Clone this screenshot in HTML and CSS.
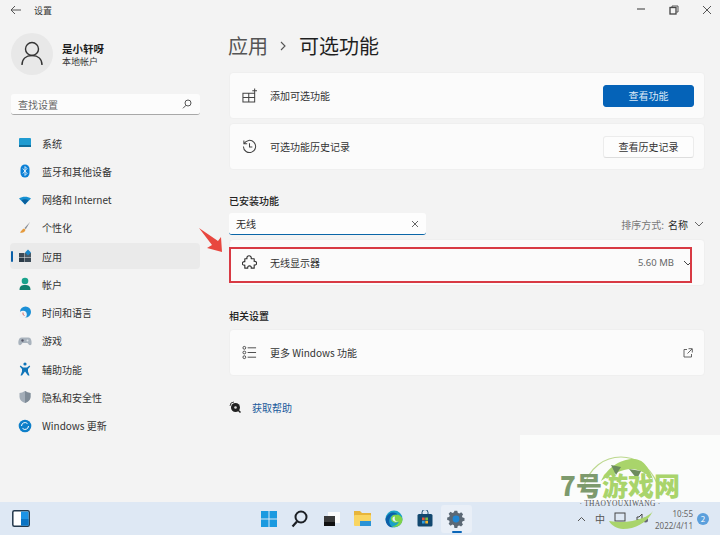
FILE: index.html
```html
<!DOCTYPE html>
<html lang="zh-CN">
<head>
<meta charset="utf-8">
<title>设置</title>
<link rel="stylesheet" href="styles.css">
</head>
<body>
<div class="window">
  <header class="titlebar">
    <svg class="back" width="12" height="10" viewBox="0 0 12 10"><path d="M5 1 1 5l4 4M1 5h10" fill="none" stroke="#555" stroke-width="1"/></svg>
    <span class="apptitle">设置</span>
    <div class="winctl">
      <svg width="10" height="10" viewBox="0 0 10 10"><path d="M1 4h8" stroke="#555" stroke-width="1.2"/></svg>
      <svg width="10" height="10" viewBox="0 0 10 10"><path d="M3 2.5V1h6v6H7.500" fill="none" stroke="#555"/><rect x="1" y="2.500" width="6" height="6.500" fill="none" stroke="#444" stroke-width="1.300"/></svg>
      <svg width="10" height="10" viewBox="0 0 10 10"><path d="m1 1 8 8M9 1 1 9" stroke="#555"/></svg>
    </div>
  </header>
  <div class="columns">
    <aside class="sidebar">
      <div class="profile">
        <div class="avatar">
          <svg width="24" height="26" viewBox="0 0 24 26"><circle cx="12" cy="8" r="6.500" fill="none" stroke="#333" stroke-width="1.400"/><path d="M2 24c0-6 4-9.500 10-9.500S22 18 22 24" fill="none" stroke="#333" stroke-width="1.400"/></svg>
        </div>
        <div class="who"><strong>是小轩呀</strong><span>本地帐户</span></div>
      </div>
      <div class="search">
        <span>查找设置</span>
        <svg width="10" height="10" viewBox="0 0 10 10"><circle cx="6" cy="4" r="3" fill="none" stroke="#555"/><path d="M4 6.300 1 9.300" stroke="#555"/></svg>
      </div>
      <nav class="nav">
        <a class="item"><svg class="ic" viewBox="0 0 14 14"><rect x="1" y="2" width="12" height="9" rx="1" fill="#1f9bd1"/><rect x="1" y="9" width="12" height="2" fill="#0f6d9c"/></svg>系统</a>
        <a class="item"><svg class="ic" viewBox="0 0 14 14"><rect x="2.500" y="0.500" width="9" height="13" rx="4.500" fill="#0a7fd6"/><path d="m4.800 4.500 4.200 5L7 11.500v-9l2 2-4.200 5" fill="none" stroke="#fff" stroke-width=".8"/></svg>蓝牙和其他设备</a>
        <a class="item"><svg class="ic" viewBox="0 0 14 14"><path d="M1 5.500C4.500 3 9.500 3 13 5.500L7 11.500z" fill="#1590d2"/><path d="M3.500 7.300c2-1.300 5-1.300 7 0L7 11.500z" fill="#0b5f9c"/></svg>网络和 Internet</a>
        <a class="item"><svg class="ic" viewBox="0 0 14 14"><path d="M12 1 6.500 7l1.300 1.300z" fill="#8a8f96"/><path d="M6 7.500c-2 .5-2.500 2.500-4 4 2.500.5 5 0 5.500-2.700z" fill="#e59a3c"/></svg>个性化</a>
        <a class="item active"><svg class="ic" viewBox="0 0 14 14"><rect x="1" y="4" width="5.500" height="4.500" fill="#3b4a57"/><rect x="1" y="9" width="5.500" height="4" fill="#2b3a47"/><rect x="7" y="9" width="6" height="4" fill="#3b4a57"/><rect x="7" y="4" width="6" height="4.500" fill="#4a5a67"/><path d="m10 .5 3 3-3 3-3-3z" fill="#1a86c8"/></svg>应用</a>
        <a class="item"><svg class="ic" viewBox="0 0 14 14"><circle cx="7" cy="4" r="3.300" fill="#1aa38c"/><path d="M1.500 13c0-4 2-5 5.500-5s5.500 1 5.500 5z" fill="#12806e"/></svg>帐户</a>
        <a class="item"><svg class="ic" viewBox="0 0 14 14"><circle cx="7.500" cy="6" r="5.500" fill="#1b8fd6"/><circle cx="5" cy="8.500" r="3.800" fill="#f1f1f4"/><path d="M5 6.500v2l1.500 1" fill="none" stroke="#c8504a" stroke-width=".8"/></svg>时间和语言</a>
        <a class="item"><svg class="ic" viewBox="0 0 14 14"><path d="M3.500 3.500h7C13 3.500 14 7 13.500 10c-.3 1.500-2 1.500-3 .3L9.500 9h-5l-1 1.300c-1 1.200-2.700 1.200-3-.3C0 7 1 3.500 3.500 3.500z" fill="#a9b3bd"/><circle cx="4.500" cy="6.500" r="1.200" fill="#556"/><circle cx="9.500" cy="6.500" r="1" fill="#dfe4ea"/></svg>游戏</a>
        <a class="item"><svg class="ic" viewBox="0 0 14 14"><circle cx="7" cy="2" r="1.600" fill="#0f74b8"/><path d="M2.500 3.500 5 5.500h4l2.500-2 .7 1.100L10 7v2.500l1.500 4H10L7 9.500 4 13.500H2.500l1.500-4V7L1.800 4.600z" fill="#0f74b8"/></svg>辅助功能</a>
        <a class="item"><svg class="ic" viewBox="0 0 14 14"><path d="M7 1c2 1.400 3.700 1.800 5.500 2v4c0 3-2.500 5-5.500 6-3-1-5.500-3-5.500-6V3C3.300 2.800 5 2.400 7 1z" fill="#a3adb8"/><path d="M7 1c2 1.400 3.700 1.800 5.500 2v4c0 3-2.500 5-5.500 6z" fill="#7f8b97"/></svg>隐私和安全性</a>
        <a class="item"><svg class="ic" viewBox="0 0 14 14"><circle cx="7" cy="7" r="6.300" fill="#0e7fc9"/><path d="M3.500 7a3.500 3.500 0 0 1 6-2.400M10.500 7a3.500 3.500 0 0 1-6 2.400" fill="none" stroke="#fff" stroke-width="1"/></svg>Windows 更新</a>
      </nav>
    </aside>
    <main class="main">
      <h1 class="crumb"><span class="parent">应用</span><svg width="8" height="10" viewBox="0 0 8 10"><path d="m2 1 4 4-4 4" fill="none" stroke="#555" stroke-width="1.100"/></svg><span>可选功能</span></h1>
      <section class="card">
        <svg class="rowic" viewBox="0 0 16 16"><path d="M1 5.500h12.500V15H1zM7.200 5.500V15M1 10.200h12.500M13.500 .5v5M11 3h5" fill="none" stroke="#444" stroke-width="1.100"/></svg>
        <span class="label">添加可选功能</span>
        <button class="btn primary">查看功能</button>
      </section>
      <section class="card gap">
        <svg class="rowic" viewBox="0 0 16 16"><path d="M2.200 5A6.500 6.500 0 1 1 1.500 8M2 1.500V5h3.500M8 4.500V8.500h3" fill="none" stroke="#444" stroke-width="1.100"/></svg>
        <span class="label">可选功能历史记录</span>
        <button class="btn">查看历史记录</button>
      </section>
      <h2 class="head">已安装功能</h2>
      <div class="filters">
        <div class="filter"><span>无线</span><svg width="8" height="8" viewBox="0 0 8 8"><path d="m1 1 6 6M7 1 1 7" stroke="#666"/></svg></div>
        <div class="sort"><span class="dim">排序方式:</span> 名称 <svg width="10" height="6" viewBox="0 0 10 6"><path d="m1 1 4 4 4-4" fill="none" stroke="#666"/></svg></div>
      </div>
      <section class="card list">
        <svg class="rowic" viewBox="0 0 16 16"><path d="M3 4h2.300C4.800 2.200 6 .8 7.500.8S10.300 2.200 9.800 4H13v2.800c1.600-.4 2.600.7 2.600 1.900s-1 2.300-2.600 1.900V14H9.800c.4-1.500-.6-2.400-1.800-2.400S5.800 12.500 6.200 14H3v-3.200C1.500 11.200.4 10.200.4 9S1.500 6.800 3 7.200z" fill="none" stroke="#333" stroke-width="1.200" stroke-linejoin="round"/></svg>
        <span class="label">无线显示器</span>
        <span class="size">5.60 MB</span>
        <svg class="chev" width="10" height="6" viewBox="0 0 10 6"><path d="m1 1 4 4 4-4" fill="none" stroke="#444"/></svg>
      </section>
      <h2 class="head short">相关设置</h2>
      <section class="card related">
        <svg class="rowic" viewBox="0 0 16 16"><path d="M6 3h9M6 8h9M6 13h9" stroke="#444"/><circle cx="2.500" cy="3" r="1.500" fill="none" stroke="#444"/><circle cx="2.500" cy="8" r="1.500" fill="none" stroke="#444"/><circle cx="2.500" cy="13" r="1.500" fill="none" stroke="#444"/></svg>
        <span class="label">更多 Windows 功能</span>
        <svg class="ext" width="10" height="10" viewBox="0 0 10 10"><path d="M4 1.500H1v7.500h7.500V6M5.500.7h3.800v3.800M9 1 4.500 5.500" fill="none" stroke="#555" stroke-width=".9"/></svg>
      </section>
      <div class="help">
        <svg width="12" height="12" viewBox="0 0 12 12"><circle cx="6.500" cy="6.500" r="4.500" fill="#222"/><path d="M1 5a4 4 0 0 1 4-4" fill="none" stroke="#444"/><path d="m9 9 2.500 2.500" stroke="#222" stroke-width="1.500"/><circle cx="6.500" cy="6.500" r="1.300" fill="#ddd"/></svg>
        <a>获取帮助</a>
      </div>
    </main>
  </div>
  <div class="wash"></div>
  <svg class="arrow" width="26" height="26" viewBox="0 0 26 26"><path d="M1 1 20 14l3-4 1 15-15-4 5-3z" fill="#e8473f"/></svg>
  <div class="redbox"></div>
</div>
<footer class="taskbar">
  <svg class="snap" width="18" height="17" viewBox="0 0 18 17"><rect x=".8" y=".8" width="16.400" height="15.400" rx="1.500" fill="#fff" stroke="#23384c" stroke-width="1.500"/><rect x="9" y="1.500" width="7.500" height="14" fill="#1b93e6"/><rect x="9" y="9" width="7.500" height="6.500" fill="#0b74c4"/></svg>
  <div class="apps">
    <span class="tb"><svg width="18" height="18" viewBox="0 0 18 18"><path d="M1 1h7.500v7.500H1zM9.500 1H17v7.500H9.500zM1 9.500h7.500V17H1zM9.500 9.500H17V17H9.500z" fill="#1b9ae0"/></svg></span>
    <span class="tb"><svg width="17" height="18" viewBox="0 0 17 18"><circle cx="10" cy="7" r="5.500" fill="none" stroke="#1b1f24" stroke-width="2"/><path d="M6 11.500 1.500 16.500" stroke="#1b1f24" stroke-width="2.200"/></svg></span>
    <span class="tb"><svg width="17" height="16" viewBox="0 0 17 16"><rect x="5" y="1" width="12" height="11" fill="#fbfbfb"/><rect x="1" y="5" width="11" height="10" fill="#3a3a3a"/><rect x="1" y="11" width="11" height="4" fill="#111"/></svg></span>
    <span class="tb"><svg width="19" height="17" viewBox="0 0 19 17"><path d="M1 1h6l2 2h9v4H1z" fill="#e7b53b"/><rect x="1" y="5" width="17" height="11" rx="1" fill="#f9d561"/><rect x="7" y="11" width="11" height="5" fill="#2b93d6"/></svg></span>
    <span class="tb"><svg width="18" height="18" viewBox="0 0 18 18"><circle cx="9" cy="9" r="8.500" fill="#1aa0c7"/><path d="M17.500 9.500C17 6 14 4.500 11 4.500 7.500 4.500 5.500 7 6 9.500c.6 3 4.500 4 8 2.300-1.500 3-4.500 4.500-7 4.500 5 2 10.500-1.500 10.500-6.800z" fill="#7fd349"/><path d="M10 6.500c-2.200 0-3 2-2.300 3.500 1 1.800 3.500 2 6 1.500-3-.2-4.700-1-3.700-5z" fill="#e8f2f8"/><path d="M.5 9C.5 14 4 17.500 8 17.500 5 15.500 3.500 12 4.500 9 5.500 5.500 9 4 12.500 4.800 11 2 4 .5.500 9z" fill="#0c5fa8"/></svg></span>
    <span class="tb"><svg width="16" height="17" viewBox="0 0 16 17"><path d="M5 4V2.500a3 3 0 0 1 6 0V4" fill="none" stroke="#1e4e74"/><rect x=".5" y="4" width="15" height="12.500" rx="1.500" fill="#12486f"/><rect x="5" y="7.500" width="2.700" height="2.700" fill="#e6563a"/><rect x="8.300" y="7.500" width="2.700" height="2.700" fill="#7fbb42"/><rect x="5" y="10.800" width="2.700" height="2.700" fill="#2f9fe0"/><rect x="8.300" y="10.800" width="2.700" height="2.700" fill="#f6b72d"/></svg></span>
    <span class="tb current"><svg width="18" height="18" viewBox="0 0 18 18"><path d="M7.500 1h3l.5 2.200 1.600.7 2-1.200 2 2.100-1.200 2 .7 1.500 2 .5v2.900l-2 .5-.7 1.600 1.100 1.900-2 2-2-1.100-1.500.6-.5 2.100h-3L7 16.300l-1.600-.6-2 1.100-2-2 1.100-1.900-.6-1.600-2-.5V8.300l2-.5.7-1.500-1.200-2 2-2.100 2 1.200 1.600-.7z" fill="#5b6875" transform="translate(.3 -.3) scale(.95)"/><circle cx="9" cy="9" r="3.400" fill="#1f86d4"/></svg></span>
  </div>
  <div class="tray">
    <svg width="9" height="6" viewBox="0 0 9 6"><path d="m1 5 3.500-3.500L8 5" fill="none" stroke="#555"/></svg>
    <span class="ime">中</span>
    <svg width="13" height="13" viewBox="0 0 13 13"><rect x="1" y="1" width="10" height="8" fill="none" stroke="#444"/><path d="M3 11h6" stroke="#444"/></svg>
    <svg width="13" height="13" viewBox="0 0 13 13"><path d="M1 5h2l3-3v9L3 8H1z" fill="none" stroke="#444"/><circle cx="9.500" cy="8" r="2.500" fill="#667"/></svg>
    <div class="clock"><span>10:55</span><span>2022/4/11</span></div>
    <span class="badge">2</span>
  </div>
</footer>
<div class="watermark">
  <svg class="wm-logo" width="92" height="76" viewBox="0 0 92 76"><path d="M8 34C14 12 30 2 46 2c14 0 28 8 36 26" fill="none" stroke="#bcd88e" stroke-width="1.200"/><path d="M26 26C34 10 48 4 58 4c8 0 14 4 20 20-8-6-14-10-22-10S34 20 26 26z" fill="#a9d46b"/><path d="M34 66c2 4 8 8 14 8 12 0 24-6 30-18-4 6-22 14-44 10z" fill="#a9d46b"/><path d="M36 10l5 10 5-8zM54 14l8 10 4-8z" fill="#6c8b5e"/></svg>
  <div class="wm-name"><span class="grey">7号</span><span class="green">游戏网</span></div>
  <div class="wm-sub">· THAOYOUXIWANG ·</div>
</div>
</body>
</html>
```
FILE: styles.css
```css
* { box-sizing: border-box; }
html, body { margin: 0; padding: 0; }
body {
  width: 720px;
  height: 535px;
  overflow: hidden;
  position: relative;
  display: flex;
  flex-direction: column;
  font-family: "Noto Sans CJK SC", "Noto Sans", sans-serif;
  font-size: 10px;
  color: #2b2b2b;
  background: #f3f3f3;
}
.window { position: relative; height: 502px; background: #f3f3f3; flex: none; }
.titlebar { height: 20px; display: flex; align-items: center; padding-left: 10px; }
.apptitle { margin-left: 12px; font-size: 9px; color: #333; }
.winctl { margin-left: auto; display: flex; gap: 23px; padding-right: 8px; }
.winctl svg { display: block; }
.columns { display: flex; }
.sidebar { width: 214px; padding: 13px 14px 0 11px; flex: none; }
.profile { display: flex; align-items: center; height: 42px; }
.avatar { width: 42px; height: 42px; border-radius: 50%; background: #e8e8e8; display: flex; align-items: center; justify-content: center; }
.who { margin-left: 9px; padding-top: 2px; display: flex; flex-direction: column; line-height: 13px; }
.who strong { font-size: 10.500px; font-weight: 700; color: #1b1b1b; }
.who span { font-size: 9px; color: #333; }
.search { margin-top: 19px; height: 21px; width: 189px; background: #fcfcfc; border-radius: 3px; border-bottom: 1px solid #a8a8a8; display: flex; align-items: center; justify-content: space-between; padding: 0 8px 0 7px; color: #666; font-size: 10px; }
.nav { margin-top: 15px; display: flex; flex-direction: column; gap: 2.280px; margin-left: -1px; }
.item { height: 26px; width: 190px; display: flex; align-items: center; padding-left: 8px; border-radius: 4px; color: #333; position: relative; font-size: 10px; }
.item .ic { width: 14px; height: 14px; margin-right: 10px; flex: none; }
.item.active { background: #eaeaea; }
.item.active::before { content: ""; position: absolute; left: 1px; top: 8px; width: 2px; height: 11px; border-radius: 1px; background: #0a5fa8; }
.main { width: 491px; padding: 0 0 0 15px; flex: none; }
.crumb { margin: 11px 0 11px -1px; height: 30px; display: flex; align-items: center; font-size: 20px; font-weight: 400; line-height: 30px; color: #1f1f1f; }
.crumb .parent { color: #555; }
.crumb svg { margin: 0 12px 0 11px; }
.card { width: 476px; height: 47px; background: #fbfbfb; border: 1px solid #efefef; border-radius: 4px; display: flex; align-items: center; padding: 0 10px 0 12px; }
.card.gap { margin-top: 4px; }
.rowic { width: 15px; height: 15px; flex: none; margin-right: 13px; }
.label { font-size: 10px; color: #333; }
.btn { margin-left: auto; width: 91px; height: 22px; border: 1px solid #ececec; border-bottom-color: #ddd; border-radius: 3px; background: #fdfdfd; font: inherit; font-size: 10px; color: #333; padding: 0; }
.btn.primary { background: #0563b8; border-color: #0563b8; color: #dbe9f6; }
.head { margin: 22px 0 0; height: 18px; line-height: 18px; font-size: 10px; font-weight: 500; color: #222; }
.head.short { height: 16px; line-height: 16px; }
.filters { margin-top: 3px; width: 476px; height: 22px; display: flex; justify-content: space-between; align-items: center; }
.filter { width: 197px; height: 22px; background: #fdfdfd; border-bottom: 1px solid #0a66a8; border-radius: 3px; display: flex; align-items: center; justify-content: space-between; padding: 0 7px; font-size: 10px; }
.sort { font-size: 10px; display: flex; align-items: center; gap: 4px; padding-right: 1px; }
.sort .dim { color: #777; }
.sort svg { margin-left: 2px; }
.card.list { margin-top: 4px; padding-right: 11px; }
.size { margin-left: auto; color: #666; font-size: 9.500px; font-family: "Noto Sans", sans-serif; }
.chev { margin-left: 9px; }
.card.related { margin-top: 5px; }
.ext { margin-left: auto; margin-right: 1px; }
.help { margin-top: 21px; height: 20px; display: flex; align-items: center; gap: 11px; padding-left: 0; }
.help a { color: #1a5a9c; font-size: 10px; }
.wash { position: absolute; left: 520px; top: 435px; width: 200px; height: 67px; background: #fbfcfb; }
.arrow { position: absolute; left: 198px; top: 227px; }
.redbox { position: absolute; left: 229px; top: 247px; width: 463px; height: 36px; border: 2px solid #d83a44; }
.taskbar { height: 33px; background: #dee8f4; display: flex; align-items: center; position: relative; flex: none; }
.snap { margin-left: 12px; flex: none; }
.apps { position: absolute; left: 253px; top: 0; height: 33px; display: flex; align-items: center; }
.tb { width: 31.300px; height: 28px; display: flex; align-items: center; justify-content: center; border-radius: 3px; position: relative; }
.tb.current { background: #e9eff7; }
.tb.current::after { content: ""; position: absolute; bottom: 0; left: 11px; width: 10px; height: 2px; border-radius: 1px; background: #0a66b8; }
.tray { margin-left: auto; display: flex; align-items: center; gap: 9px; padding-right: 11px; color: #555; }
.ime { font-size: 10px; color: #555; }
.clock { display: flex; flex-direction: column; align-items: flex-end; font-family: "Noto Sans", sans-serif; font-size: 8px; line-height: 12px; color: #666; margin-left: -1px; padding-top: 2px; width: 36px; white-space: nowrap; }
.badge { width: 12px; height: 12px; border-radius: 50%; background: #5b9fdc; color: #fff; font-size: 8px; line-height: 12px; text-align: center; margin-left: -5px; }
.watermark { position: absolute; left: 560px; top: 455px; width: 120px; height: 80px; display: flex; flex-direction: column; align-items: center; }
.wm-logo { position: absolute; left: 15px; top: 0; }
.wm-name { position: relative; margin-top: 17px; font-size: 26px; line-height: 26px; font-weight: 900; white-space: nowrap; letter-spacing: 0; }
.wm-name .grey { color: #7d9a6d; }
.wm-name .green { color: #a9d46b; }
.wm-sub { position: relative; margin-top: 2px; font-family: "Liberation Serif", serif; font-size: 7.500px; line-height: 8px; color: #555; white-space: nowrap; letter-spacing: .3px; }
```
